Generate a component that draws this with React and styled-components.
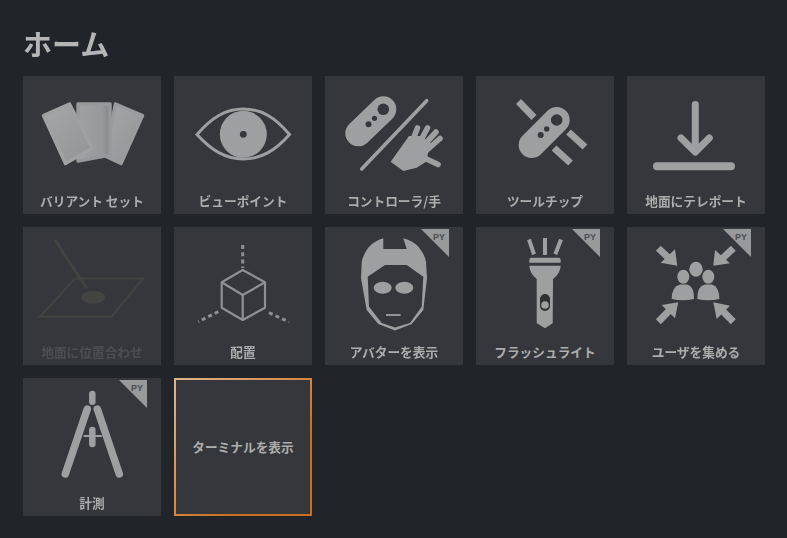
import styled, { createGlobalStyle } from "styled-components";

const GlobalStyle = createGlobalStyle`
  html, body {
    margin: 0;
    background: #212429;
  }
`;

const ICON = "#9e9fa1";
const TILE = "#36373c";

const Page = styled.main`
  width: 787px;
  height: 538px;
  box-sizing: border-box;
  padding: 22px 0 0 23px;
  overflow: hidden;
  font-family: "Noto Sans CJK JP", "Noto Sans", sans-serif;
  filter: blur(0.35px);
`;

const Title = styled.h1`
  margin: 0 0 12px;
  height: 42px;
  line-height: 42px;
  font-size: 29px;
  font-weight: 700;
  color: #b5b5b5;
`;

const Grid = styled.div`
  display: grid;
  grid-template-columns: repeat(5, 138px);
  grid-auto-rows: 138px;
  gap: 13px;
`;

const Tile = styled.div`
  position: relative;
  display: flex;
  flex-direction: column;
  box-sizing: border-box;
  background: ${TILE};
  color: ${(p) => (p.$disabled ? "#4d4e52" : "#adadad")};
`;

const FocusTile = styled(Tile)`
  justify-content: center;
  padding-bottom: 1px;
  border: 2px solid;
  border-image: linear-gradient(135deg, #e0b48c, #d98f4f 40%, #c8701d 70%) 1;
`;

const Art = styled.svg`
  display: block;
  width: 138px;
  height: 112px;
  flex: none;
`;

const Label = styled.div`
  height: 25px;
  line-height: 25px;
  text-align: center;
  font-size: 12.7px;
  font-weight: 700;
  white-space: pre;
`;

const Badge = styled.div`
  position: absolute;
  top: 2px;
  right: 14px;
  width: 28px;
  height: 28px;
  background: #98999b;
  clip-path: polygon(0 0, 100% 0, 100% 100%);
  color: #4c4d51;
  font-family: "Liberation Sans", sans-serif;
  font-size: 9px;
  font-weight: 700;
  line-height: 10px;
  text-align: right;
  padding: 3px 4px 0 0;
  box-sizing: border-box;
`;

const Cards = () => (
  <Art viewBox="0 0 138 112">
    <defs>
      <linearGradient id="cardMid" x1="0" x2="1" y1="0" y2="0">
        <stop offset="0" stopColor="#a0a1a3" />
        <stop offset="0.75" stopColor="#98999b" />
        <stop offset="1" stopColor="#858689" />
      </linearGradient>
      <linearGradient id="cardSide" x1="0" x2="1" y1="0" y2="1">
        <stop offset="0" stopColor="#a6a7a9" />
        <stop offset="1" stopColor="#929395" />
      </linearGradient>
    </defs>
    <g strokeLinejoin="round" strokeWidth="3.5">
      <path d="M92.5 28 L119.5 39.5 L98 87.5 L82 80 Z" fill="url(#cardSide)" stroke="#9a9b9d" />
      <path d="M55 28 H87 V79 L55 85 Z" fill="url(#cardMid)" stroke="#98999b" />
      <path d="M20.5 39.5 L46.5 28 L69 72 L42.5 87.5 Z" fill="url(#cardSide)" stroke="#a0a1a3" />
    </g>
  </Art>
);

const Eye = () => (
  <Art viewBox="0 0 138 112">
    <path
      d="M23 58.5 C38 41 52 33 69.3 33 C87 33 101 41 115.5 58.5 C101 75 87 83 69.3 83 C52 83 38 75 23 58.5 Z"
      fill="none"
      stroke={ICON}
      strokeWidth="3"
    />
    <circle cx="69.3" cy="58.3" r="23.5" fill={ICON} />
    <circle cx="69.3" cy="58.3" r="3.4" fill={TILE} />
  </Art>
);

const ControllerHand = () => (
  <Art viewBox="0 0 138 112">
    <line x1="58.3" y1="33.3" x2="33.3" y2="57.3" stroke={ICON} strokeWidth="26" strokeLinecap="round" />
    <circle cx="58.3" cy="33.3" r="5.8" fill={TILE} />
    <circle cx="49.5" cy="42.3" r="2.6" fill={TILE} />
    <circle cx="43.5" cy="48.3" r="3" fill={TILE} />
    <line x1="101.7" y1="24.7" x2="36.7" y2="93" stroke={ICON} strokeWidth="3.6" strokeLinecap="round" />
    <path d="M65.7 85.7 L84 60 L96 60 L107 68 L103.3 76 L101 85.7 L91.7 91.7 L78.3 95 Z" fill={ICON} />
    <g stroke={ICON} strokeWidth="5.6" strokeLinecap="round">
      <line x1="92.5" y1="52" x2="87" y2="66" />
      <line x1="102.5" y1="52" x2="95" y2="66" />
      <line x1="111" y1="56" x2="100" y2="68" />
      <line x1="115" y1="62.5" x2="102" y2="74" />
      <line x1="113" y1="88.5" x2="100" y2="82.3" />
    </g>
  </Art>
);

const Tooltip = () => (
  <Art viewBox="0 0 138 112">
    <line x1="80.7" y1="44" x2="55.7" y2="69" stroke={ICON} strokeWidth="26" strokeLinecap="round" />
    <circle cx="80.7" cy="44" r="5.8" fill={TILE} />
    <circle cx="70.7" cy="53" r="2.7" fill={TILE} />
    <circle cx="64.7" cy="59" r="3" fill={TILE} />
    <g stroke={ICON} strokeWidth="7">
      <line x1="42.5" y1="25.5" x2="58" y2="41.5" />
      <line x1="92.5" y1="56" x2="109" y2="71" />
      <line x1="78" y1="72" x2="94.5" y2="87" />
    </g>
  </Art>
);

const Teleport = () => (
  <Art viewBox="0 0 138 112">
    <g fill="none" stroke={ICON} strokeLinecap="round" strokeLinejoin="round">
      <path d="M68.3 28.5 V75" strokeWidth="7" />
      <path d="M54 62 L68.3 76 L82.3 62" strokeWidth="7" />
      <path d="M30 90.3 H104" strokeWidth="8" />
    </g>
  </Art>
);

const GroundAlign = () => (
  <Art viewBox="0 0 138 112">
    <g fill="none" stroke="#434342" strokeWidth="2">
      <path d="M32 13 L63.7 61.3" strokeWidth="3" />
      <path d="M52 51.5 H120 L88.7 89.7 H17 Z" />
    </g>
    <ellipse cx="70.3" cy="70.3" rx="12" ry="6.5" fill="#434342" />
  </Art>
);

const Placement = () => (
  <Art viewBox="0 0 138 112">
    <g fill="none" stroke="#8f9092" strokeWidth="2.2" strokeLinejoin="round">
      <path d="M68.7 43 L91 55.3 V80.7 L68.7 93 L47.7 80.7 V55.3 Z" />
      <path d="M47.7 55.3 L68.7 68 L91 55.3 M68.7 68 V93" />
      <g strokeWidth="3" strokeDasharray="4 3.2">
        <path d="M68.7 18 V41" />
        <path d="M44.3 84.7 L24.3 94.7" />
        <path d="M95 85.7 L115 95" />
      </g>
    </g>
  </Art>
);

const Avatar = () => (
  <Art viewBox="0 0 138 112">
    <path
      d="M58.3 11.3 V22 H81.7 L78.3 11.3 C85 13 90 16 93.3 19.7 C97 24 100 29 101 34.7 L102 51.3 L98.3 83 L86.7 97 L70 103.5 L53.3 97 L41.7 83 L36 51.3 L36.7 34.7 C38 29 41 23 45 18.7 C49 15 53 13 58.3 11.3 Z"
      fill={ICON}
    />
    <path
      d="M60 38 H81.7 L98.3 49.7 L96.7 79.7 L85 96 L70 100.5 L56.7 96 L44 79.7 L42.7 49.7 Z"
      fill={TILE}
    />
    <ellipse cx="57.7" cy="60.7" rx="9" ry="6" fill={ICON} />
    <ellipse cx="79.3" cy="60.7" rx="9" ry="6" fill={ICON} />
    <line x1="61" y1="88" x2="75.7" y2="88" stroke={ICON} strokeWidth="1.8" />
  </Art>
);

const Flashlight = () => (
  <Art viewBox="0 0 138 112">
    <g stroke={ICON} strokeWidth="4">
      <line x1="53" y1="12.5" x2="58" y2="27.3" />
      <line x1="69" y1="11" x2="69" y2="28" />
      <line x1="85" y1="12.5" x2="79.3" y2="27.3" />
    </g>
    <path d="M55 30.7 H83 Q85 30.7 84.7 35.7 H53.3 Q53 30.7 55 30.7 Z" fill={ICON} />
    <path
      d="M53.3 38.7 H84.7 Q84.5 46 77 52 L76.7 96.3 L69 101.3 L60.7 96.3 V52 Q53.5 46 53.3 38.7 Z"
      fill={ICON}
    />
    <rect x="64" y="67" width="10" height="17" rx="5" fill="#2f3034" />
    <circle cx="69" cy="78" r="3.8" fill={ICON} />
  </Art>
);

const GatherUsers = () => (
  <Art viewBox="0 0 138 112">
    <ellipse cx="69" cy="42.3" rx="6.7" ry="7.5" fill={ICON} />
    <ellipse cx="56.3" cy="49.7" rx="6" ry="7" fill={ICON} />
    <ellipse cx="81.3" cy="49.7" rx="6" ry="7" fill={ICON} />
    <path d="M44.7 72 Q44.5 60 53 57.5 H60 Q67.3 59 67 72 Q56 74.5 44.7 72 Z" fill={ICON} />
    <path d="M70.3 72 Q70 59 78 57.5 H85 Q92.5 60 92.3 72 Q81 74.5 70.3 72 Z" fill={ICON} />
    <g stroke={ICON} strokeWidth="7">
      <line x1="31.3" y1="21.3" x2="44.7" y2="33.7" />
      <line x1="106.3" y1="21.3" x2="93" y2="33.7" />
      <line x1="31.3" y1="94.7" x2="44.7" y2="81.3" />
      <line x1="106.3" y1="94.7" x2="93" y2="81.3" />
    </g>
    <g fill={ICON}>
      <polygon points="50.3,38.7 33.7,35.7 48,22.3" />
      <polygon points="86.3,38.7 88,23 103,36.3" />
      <polygon points="51.3,75.3 34.7,78 48,91.3" />
      <polygon points="86.3,75.3 103,78.7 89.7,92" />
    </g>
  </Art>
);

const Compass = () => (
  <Art viewBox="0 0 138 112">
    <g stroke={ICON} strokeLinecap="round">
      <line x1="69.3" y1="16" x2="69.3" y2="23.7" strokeWidth="6.5" />
      <line x1="69.3" y1="52" x2="69.3" y2="66" strokeWidth="6.5" />
      <line x1="61.3" y1="58" x2="78" y2="58" strokeWidth="2" />
      <line x1="64.3" y1="31" x2="42.3" y2="96" strokeWidth="7.5" />
      <line x1="74.3" y1="31" x2="96.3" y2="96" strokeWidth="7.5" />
    </g>
  </Art>
);

const tools = [
  { label: "バリアント セット", Icon: Cards },
  { label: "ビューポイント", Icon: Eye },
  { label: "コントローラ/手", Icon: ControllerHand },
  { label: "ツールチップ", Icon: Tooltip },
  { label: "地面にテレポート", Icon: Teleport },
  { label: "地面に位置合わせ", Icon: GroundAlign, disabled: true },
  { label: "配置", Icon: Placement },
  { label: "アバターを表示", Icon: Avatar, py: true },
  { label: "フラッシュライト", Icon: Flashlight, py: true },
  { label: "ユーザを集める", Icon: GatherUsers, py: true },
  { label: "計測", Icon: Compass, py: true },
];

export default function App() {
  return (
    <>
      <GlobalStyle />
      <Page>
        <Title>ホーム</Title>
        <Grid>
          {tools.map(({ label, Icon, disabled, py }) => (
            <Tile key={label} $disabled={disabled}>
              <Icon />
              <Label>{label}</Label>
              {py && <Badge>PY</Badge>}
            </Tile>
          ))}
          <FocusTile>
            <Label>ターミナルを表示</Label>
          </FocusTile>
        </Grid>
      </Page>
    </>
  );
}
